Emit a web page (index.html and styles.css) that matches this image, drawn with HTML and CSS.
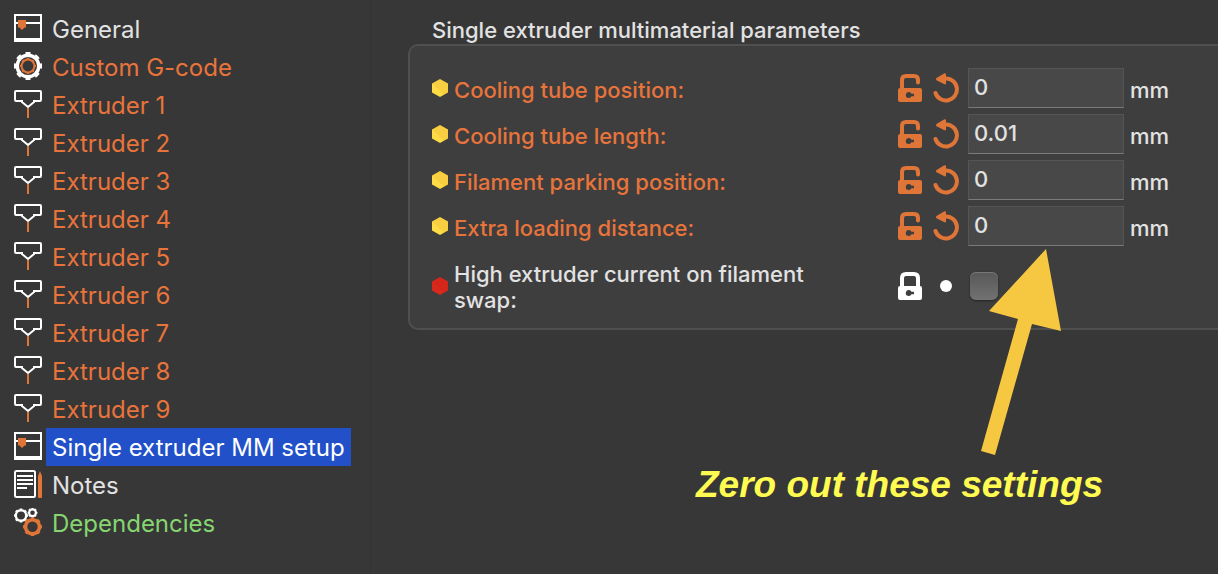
FILE: index.html
```html
<!DOCTYPE html>
<html lang="en">
<head>
<meta charset="utf-8">
<title>Printer settings</title>
<link rel="stylesheet" href="styles.css">
</head>
<body>
<svg class="defs" width="0" height="0" aria-hidden="true">
  <symbol id="page" viewBox="0 0 28 28">
    <path d="M0 0H28V28H0ZM2 2V8H26V2ZM2 10V24H26V10Z" fill="#fff" fill-rule="evenodd"/>
    <path d="M4 6H12V13.500H10.500L8 16L5.500 13.500H4Z" fill="#e07538"/>
  </symbol>
  <symbol id="gcode" viewBox="0 0 28 28">
    <g fill="none" stroke="#fff">
      <circle cx="14" cy="14" r="10.800" stroke-width="3.400"/>
      <circle cx="14" cy="14" r="12.800" stroke-width="2.600" pathLength="80" stroke-dasharray="5 5" stroke-dashoffset="2.500"/>
    </g>
    <g fill="none" stroke="#e07538">
      <circle cx="14" cy="14" r="6.400" stroke-width="2"/>
      <circle cx="14" cy="14" r="7.500" stroke-width="1.400" pathLength="80" stroke-dasharray="4 6" stroke-dashoffset="2"/>
    </g>
  </symbol>
  <symbol id="nozzle" viewBox="0 0 28 28">
    <path d="M2 1H26Q27 1 27 2V9.500Q27 11 26 11H20V12L14 17L8 12V11H2Q1 11 1 9.500V2Q1 1 2 1Z" fill="none" stroke="#fff" stroke-width="2"/>
    <path d="M14 18V28" stroke="#e07538" stroke-width="2"/>
  </symbol>
  <symbol id="notes" viewBox="0 0 28 28">
    <rect x="1" y="1" width="20" height="26" rx="1.500" fill="none" stroke="#fff" stroke-width="2"/>
    <path d="M3 6H19M3 10H19M3 14H19M3 18H13" stroke="#fff" stroke-width="2"/>
    <path d="M26 1L28 6V27Q28 28 27 28H25Q24 28 24 27V6Z" fill="#e07538"/>
  </symbol>
  <symbol id="gears" viewBox="0 0 28 28">
    <g fill="none" stroke="#fff">
      <circle cx="7" cy="7.500" r="5.200" stroke-width="2.400"/>
      <circle cx="7" cy="7.500" r="6.300" stroke-width="1.600" pathLength="80" stroke-dasharray="5 5" stroke-dashoffset="2.500"/>
      <circle cx="18.500" cy="4.800" r="3.400" stroke-width="2.200"/>
      <circle cx="18.500" cy="4.800" r="4.300" stroke-width="1.400" pathLength="80" stroke-dasharray="5 5" stroke-dashoffset="2.500"/>
    </g>
    <g fill="none" stroke="#e07538">
      <circle cx="18.500" cy="18.700" r="7" stroke-width="3.600"/>
      <circle cx="18.500" cy="18.700" r="8.600" stroke-width="1.800" pathLength="80" stroke-dasharray="5 5" stroke-dashoffset="2.500"/>
    </g>
  </symbol>
  <symbol id="unlock" viewBox="0 0 24 28">
    <path d="M4 15V6Q4 2 8 2H16Q20 2 20 6V8.500" fill="none" stroke="currentColor" stroke-width="4"/>
    <circle cx="20" cy="8.500" r="2" fill="currentColor"/>
    <path d="M2 14H22Q24 14 24 16V26Q24 28 22 28H2Q0 28 0 26V16Q0 14 2 14ZM11 18A3 3 0 1 0 13.500 22.300H16V19.700H13.500A3 3 0 0 0 11 18Z" fill="currentColor" fill-rule="evenodd"/>
  </symbol>
  <symbol id="lock" viewBox="0 0 24 28">
    <path d="M4 15V6Q4 2 8 2H16Q20 2 20 6V15" fill="none" stroke="currentColor" stroke-width="4"/>
    <path d="M2 14H22Q24 14 24 16V26Q24 28 22 28H2Q0 28 0 26V16Q0 14 2 14ZM11 18A3 3 0 1 0 13.500 22.300H16V19.700H13.500A3 3 0 0 0 11 18Z" fill="currentColor" fill-rule="evenodd"/>
  </symbol>
  <symbol id="undo" viewBox="0 0 26 30">
    <path d="M11 5.500H13A11 11 0 1 1 2.500 20" fill="none" stroke="currentColor" stroke-width="4" stroke-linecap="round"/>
    <path d="M3.500 5L11 .500Q13 -.500 13 1.500V10.500Q13 12 11 11L3.500 7.300Q2.500 6 3.500 5Z" fill="currentColor"/>
  </symbol>
  <symbol id="hex" viewBox="0 0 16 18">
    <path d="M8 0L16 4.500V13.500L8 18L0 13.500V4.500Z" fill="currentColor"/>
    <path d="M0 4.500L8 0L16 4.500V13.500L12 15.700Z" fill="#a00" opacity=".06"/>
  </symbol>
</svg>

<div class="app">
  <nav class="sidebar" aria-label="Settings pages">
    <a class="item plain" href="#"><svg class="icon"><use href="#page"/></svg><span class="name">General</span></a>
    <a class="item" href="#"><svg class="icon"><use href="#gcode"/></svg><span class="name">Custom G-code</span></a>
    <a class="item" href="#"><svg class="icon"><use href="#nozzle"/></svg><span class="name">Extruder 1</span></a>
    <a class="item" href="#"><svg class="icon"><use href="#nozzle"/></svg><span class="name">Extruder 2</span></a>
    <a class="item" href="#"><svg class="icon"><use href="#nozzle"/></svg><span class="name">Extruder 3</span></a>
    <a class="item" href="#"><svg class="icon"><use href="#nozzle"/></svg><span class="name">Extruder 4</span></a>
    <a class="item" href="#"><svg class="icon"><use href="#nozzle"/></svg><span class="name">Extruder 5</span></a>
    <a class="item" href="#"><svg class="icon"><use href="#nozzle"/></svg><span class="name">Extruder 6</span></a>
    <a class="item" href="#"><svg class="icon"><use href="#nozzle"/></svg><span class="name">Extruder 7</span></a>
    <a class="item" href="#"><svg class="icon"><use href="#nozzle"/></svg><span class="name">Extruder 8</span></a>
    <a class="item" href="#"><svg class="icon"><use href="#nozzle"/></svg><span class="name">Extruder 9</span></a>
    <a class="item selected" href="#" aria-current="page"><svg class="icon"><use href="#page"/></svg><span class="name">Single extruder MM setup</span></a>
    <a class="item plain" href="#"><svg class="icon"><use href="#notes"/></svg><span class="name">Notes</span></a>
    <a class="item system" href="#"><svg class="icon"><use href="#gears"/></svg><span class="name">Dependencies</span></a>
  </nav>

  <main class="content">
    <h1 class="title">Single extruder multimaterial parameters</h1>
    <form class="group">
      <div class="row">
        <svg class="hex"><use href="#hex"/></svg>
        <label class="label" for="tube-pos">Cooling tube position:</label>
        <button class="tool" type="button" aria-label="Unlocked value"><svg class="lock"><use href="#unlock"/></svg></button>
        <button class="tool" type="button" aria-label="Revert"><svg class="undo"><use href="#undo"/></svg></button>
        <input class="field" id="tube-pos" type="text" value="0">
        <span class="unit">mm</span>
      </div>
      <div class="row">
        <svg class="hex"><use href="#hex"/></svg>
        <label class="label" for="tube-len">Cooling tube length:</label>
        <button class="tool" type="button" aria-label="Unlocked value"><svg class="lock"><use href="#unlock"/></svg></button>
        <button class="tool" type="button" aria-label="Revert"><svg class="undo"><use href="#undo"/></svg></button>
        <input class="field" id="tube-len" type="text" value="0.01">
        <span class="unit">mm</span>
      </div>
      <div class="row">
        <svg class="hex"><use href="#hex"/></svg>
        <label class="label" for="park-pos">Filament parking position:</label>
        <button class="tool" type="button" aria-label="Unlocked value"><svg class="lock"><use href="#unlock"/></svg></button>
        <button class="tool" type="button" aria-label="Revert"><svg class="undo"><use href="#undo"/></svg></button>
        <input class="field" id="park-pos" type="text" value="0">
        <span class="unit">mm</span>
      </div>
      <div class="row">
        <svg class="hex"><use href="#hex"/></svg>
        <label class="label" for="load-dist">Extra loading distance:</label>
        <button class="tool" type="button" aria-label="Unlocked value"><svg class="lock"><use href="#unlock"/></svg></button>
        <button class="tool" type="button" aria-label="Revert"><svg class="undo"><use href="#undo"/></svg></button>
        <input class="field" id="load-dist" type="text" value="0">
        <span class="unit">mm</span>
      </div>
      <div class="row expert">
        <svg class="hex"><use href="#hex"/></svg>
        <label class="label" for="high-current">High extruder current on filament swap:</label>
        <button class="tool" type="button" aria-label="Locked value"><svg class="lock"><use href="#lock"/></svg></button>
        <button class="tool" type="button" aria-label="Unchanged"><span class="dot"></span></button>
        <input class="check" id="high-current" type="checkbox">
      </div>
    </form>
    <div class="callout">
      <svg class="arrow" viewBox="0 0 80 206" aria-hidden="true"><path d="M65 0L80 82L51 75L14 206L0 202L37 70L8 62Z" fill="#f6c842"/></svg>
      <p class="note">Zero out these settings</p>
    </div>
  </main>
</div>
</body>
</html>
```
FILE: styles.css
```css
* {
  box-sizing: border-box;
}

body {
  margin: 0;
  background: #373737;
  color: #e2e2e2;
  font-family: Inter, "Liberation Sans", sans-serif;
  font-size: 22px;
  font-weight: 450;
}

.defs {
  position: absolute;
}

.app {
  display: flex;
  min-height: 100vh;
}

.sidebar {
  flex: none;
  width: 371px;
  padding-top: 10px;
  border-right: 1px solid #333;
}

.item {
  display: flex;
  align-items: center;
  gap: 4px;
  height: 38px;
  padding-left: 14px;
  color: #e8743b;
  font-size: 24px;
  font-weight: 400;
  text-decoration: none;
}

.icon {
  width: 28px;
  height: 28px;
  margin-bottom: 2px;
}

.name {
  padding: 2px 6px 0;
  line-height: 36px;
}

.plain {
  color: #e2e2e2;
}

.system {
  color: #85d670;
}

.selected {
  color: #fff;
}

.selected .name {
  background: #2150c9;
}

.content {
  position: relative;
  flex: 1;
  min-width: 0;
  padding: 16px 0 0 37px;
}

.title {
  margin: 0;
  padding-left: 24px;
  font-size: 22px;
  font-weight: 450;
  line-height: 28px;
}

.group {
  display: grid;
  gap: 6px;
  padding: 22px 0 8px 22px;
  border: 2px solid #4f4f4f;
  border-right: 0;
  border-radius: 10px 0 0 10px;
  background: #3e3e3e;
}

.row {
  display: grid;
  grid-template-columns: 16px 444px 36px 36px 160px auto;
  align-items: center;
  justify-content: start;
  min-height: 40px;
  color: #e8743b;
}

.hex {
  width: 16px;
  height: 18px;
  color: #fddc45;
}

.label {
  padding: 4px 72px 0 6px;
  line-height: 26px;
}

.tool {
  display: grid;
  place-items: center;
  height: 30px;
  padding: 0;
  border: 0;
  background: none;
  color: #e07538;
}

.lock {
  width: 24px;
  height: 28px;
}

.undo {
  width: 26px;
  height: 30px;
}

.field {
  width: 156px;
  height: 40px;
  margin: 0 0 0 4px;
  padding: 0 5px 3px;
  border: 1px solid #555;
  border-bottom: 1px solid #7a7a7a;
  background: #484848;
  color: #e2e2e2;
  font: inherit;
}

.unit {
  padding: 4px 0 0 6px;
  color: #e2e2e2;
}

.expert {
  min-height: 68px;
  color: #e2e2e2;
}

.expert .label {
  padding-top: 2px;
}

.expert .hex {
  color: #d8291c;
}

.expert .tool {
  color: #fff;
}

.dot {
  width: 12px;
  height: 12px;
  border-radius: 50%;
  background: #fff;
}

.check {
  appearance: none;
  width: 28px;
  height: 28px;
  margin: 0 0 0 6px;
  border-radius: 6px;
  background: linear-gradient(#585858, #727272);
  box-shadow: 0 1px 2px #222, inset 0 1px 0 #777;
}

.callout {
  position: absolute;
  top: 249px;
  left: 325px;
}

.arrow {
  display: block;
  width: 80px;
  height: 206px;
  margin-left: 285px;
}

.note {
  margin: 8px 0 0;
  color: #fffb50;
  font: italic bold 37px/44px "Liberation Sans", Arial, sans-serif;
  white-space: nowrap;
}
```
